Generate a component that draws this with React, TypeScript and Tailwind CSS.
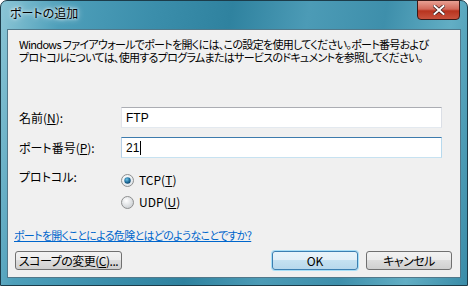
// @ts-nocheck
import React from 'react';

const jp = "font-['MS_UI_Gothic','Noto_Sans_CJK_JP',sans-serif] [font-feature-settings:'palt']";

function Radio({ checked }: { checked: boolean }) {
  return (
    <svg width="13" height="13" viewBox="0 0 13 13" className="shrink-0">
      <defs>
        <radialGradient id={checked ? 'rg1' : 'rg0'} cx="0.4" cy="0.35" r="0.7">
          <stop offset="0" stopColor="#ffffff" />
          <stop offset="1" stopColor={checked ? '#dde3e8' : '#c9cdd1'} />
        </radialGradient>
        <radialGradient id="dot" cx="0.4" cy="0.35" r="0.7">
          <stop offset="0" stopColor="#6fc4e8" />
          <stop offset="0.6" stopColor="#1f6f9c" />
          <stop offset="1" stopColor="#0d3f66" />
        </radialGradient>
      </defs>
      <circle cx="6.5" cy="6.5" r="6" fill={`url(#${checked ? 'rg1' : 'rg0'})`} stroke="#8e8f8f" strokeWidth="1" />
      {checked && <circle cx="6.5" cy="6.5" r="3.2" fill="url(#dot)" />}
    </svg>
  );
}

function Btn({ children, primary, className }: any) {
  return (
    <div
      className={`h-[19px] rounded-[3px] border flex items-center justify-center text-[12px] text-black whitespace-nowrap ${
        primary
          ? 'border-[#3c7fb1] bg-[linear-gradient(#e8f4fa_0%,#e2eff7_50%,#c5e1f1_50%,#b7d8ec_100%)] shadow-[0_0_0_1px_#a8dff7]'
          : 'border-[#707070] bg-[linear-gradient(#f2f2f2_0%,#ebebeb_50%,#dddddd_50%,#cfcfcf_100%)]'
      } ${className}`}
    >
      {children}
    </div>
  );
}

export default function App() {
  return (
    <div className="w-[468px] h-[286px] bg-white">
      <div className="w-[468px] h-[286px] rounded-t-[7px] border border-[#1c3c4a] bg-[linear-gradient(100deg,#8cc6d6_0%,#4e9fba_12%,#3b8eab_30%,#2f829f_45%,#4c9bb6_60%,#3e8fab_75%,#62aec4_88%,#3a8ca8_100%)] flex flex-col relative">
        {/* title */}
        <div className="h-[28px] flex items-center pl-[9px] pb-[4px]">
          <span className={`${jp} text-[12px] text-black [text-shadow:0_0_6px_#ffffff,0_0_3px_#ffffff]`}>ポートの追加</span>
        </div>
        <div className="absolute right-[7px] top-[-1px] w-[43px] h-[20px] rounded-b-[4px] border border-[#3a1a18] bg-[linear-gradient(#e8a093_0%,#d2695a_45%,#b8341f_55%,#c8523d_100%)] flex items-center justify-center">
          <svg width="12" height="10" viewBox="0 0 12 10">
            <path d="M1.5 1 L10.5 9 M10.5 1 L1.5 9" stroke="#3a1a18" strokeWidth="3.4" strokeLinecap="square" />
            <path d="M1.5 1 L10.5 9 M10.5 1 L1.5 9" stroke="#ffffff" strokeWidth="2" strokeLinecap="square" />
          </svg>
        </div>

        {/* client */}
        <div className="mx-[6px] mb-[7px] flex-1 border border-[#51788a] bg-[#f0f0f0] pl-[11px] pr-[18px] pt-[8px] flex flex-col">
          <div className={`${jp} text-[11px] tracking-[-0.7px] leading-[13px] text-black whitespace-nowrap`}>
            <div>Windows ファイアウォールでポートを開くには、この設定を使用してください。ポート番号および</div>
            <div>プロトコルについては、使用するプログラムまたはサービスのドキュメントを参照してください。</div>
          </div>

          <div className="mt-[43px] flex items-center h-[21px]">
            <span className={`${jp} w-[102px] text-[12px] text-black`}>名前(<u>N</u>):</span>
            <div className="flex-1 h-[21px] border border-[#abadb3] border-l-[#e2e3ea] border-r-[#dbdfe6] border-b-[#e3e9ef] bg-white flex items-center pl-[4px]">
              <span className="font-['Liberation_Sans',sans-serif] text-[12px] text-black">FTP</span>
            </div>
          </div>

          <div className="mt-[9px] flex items-center h-[21px]">
            <span className={`${jp} w-[102px] text-[12px] text-black`}>ポート番号(<u>P</u>):</span>
            <div className="flex-1 h-[21px] border border-[#3d7bad] border-l-[#b5cfe7] border-r-[#b7d9ed] border-b-[#c7e2f1] bg-white flex items-center pl-[4px]">
              <span className="font-['Liberation_Sans',sans-serif] text-[12px] text-black">21</span>
              <span className="w-px h-[14px] bg-black ml-[1px]" />
            </div>
          </div>

          <div className="mt-[12px] flex">
            <span className={`${jp} w-[102px] text-[12px] text-black leading-[14px]`}>プロトコル:</span>
            <div className="flex flex-col gap-[8px] pt-[3px]">
              <div className="flex items-center gap-[5px]">
                <Radio checked />
                <span className={`${jp} text-[12px] text-black leading-[14px]`}>TCP(<u>T</u>)</span>
              </div>
              <div className="flex items-center gap-[5px]">
                <Radio checked={false} />
                <span className={`${jp} text-[12px] text-black leading-[14px]`}>UDP(<u>U</u>)</span>
              </div>
            </div>
          </div>

          <div className={`${jp} mt-[19px] -ml-[5px] text-[11px] tracking-[-0.7px] leading-[14px] text-[#0066cc] underline whitespace-nowrap`}>
            ポートを開くことによる危険とはどのようなことですか?
          </div>

          <div className="mt-[9px] -ml-[4px] -mr-[10px] flex items-center">
            <Btn className={`${jp} w-[107px] text-[11px] tracking-[-0.5px]`}>スコープの変更(<span className="underline">C</span>)...</Btn>
            <div className="flex-1" />
            <Btn primary className={`${jp} w-[86px]`}>OK</Btn>
            <Btn className={`${jp} w-[86px] ml-[8px] tracking-[-0.5px]`}>キャンセル</Btn>
          </div>
        </div>
      </div>
    </div>
  );
}
